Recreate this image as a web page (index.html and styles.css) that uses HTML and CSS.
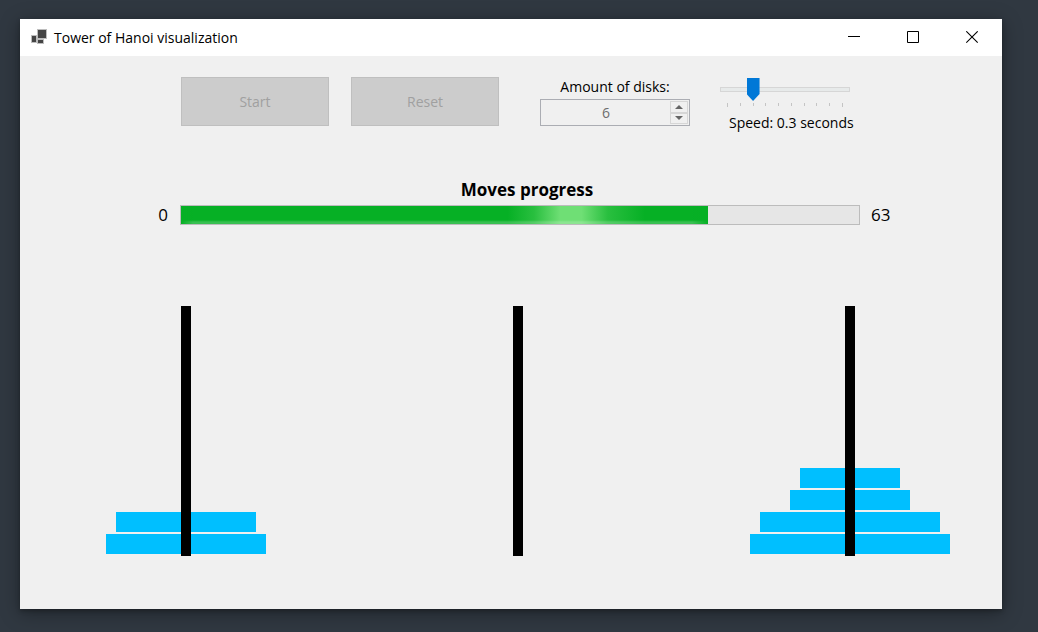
FILE: index.html
```html
<!DOCTYPE html>
<html lang="en">
<head>
<meta charset="utf-8">
<title>Tower of Hanoi visualization</title>
<link rel="stylesheet" href="styles.css">
</head>
<body>
<div class="window">
  <header class="titlebar">
    <svg class="app-icon" width="18" height="18" viewBox="0 0 18 18" aria-hidden="true">
      <g fill="#444" stroke="#bdbdbd" stroke-width="1">
        <rect x="1.500" y="6.500" width="5" height="7"/>
        <rect x="7.500" y="10.500" width="6" height="4"/>
        <rect x="7.500" y="0.500" width="9" height="9"/>
      </g>
    </svg>
    <h1 class="title">Tower of Hanoi visualization</h1>
    <button class="caption-button" type="button" aria-label="Minimize">
      <svg width="13" height="13" viewBox="0 0 13 13"><path d="M0 5.500H12" stroke="#000"/></svg>
    </button>
    <button class="caption-button" type="button" aria-label="Maximize">
      <svg width="13" height="13" viewBox="0 0 13 13"><path d="M.5 .5H11.500V11.500H.5Z" fill="none" stroke="#000"/></svg>
    </button>
    <button class="caption-button" type="button" aria-label="Close">
      <svg width="13" height="13" viewBox="0 0 13 13"><path d="M.3 .3L11.700 11.700M11.700 .3L.3 11.700" stroke="#000" stroke-width="1.100"/></svg>
    </button>
  </header>
  <main class="content">
    <section class="controls">
      <button class="action" type="button" disabled>Start</button>
      <button class="action" type="button" disabled>Reset</button>
      <div class="amount">
        <label class="label" for="disks">Amount of disks:</label>
        <div class="spinner">
          <input class="spinner-value" id="disks" type="number" value="6" min="1" max="10" disabled>
          <div class="spinner-buttons">
            <button class="step" type="button" aria-label="More disks" disabled><svg width="8" height="4" viewBox="0 0 8 4"><path d="M0 4L4 0L8 4Z" fill="#666"/></svg></button>
            <button class="step" type="button" aria-label="Fewer disks" disabled><svg width="8" height="4" viewBox="0 0 8 4"><path d="M0 0L4 4L8 0Z" fill="#666"/></svg></button>
          </div>
        </div>
      </div>
      <div class="speed">
        <input class="slider" id="speed" type="range" min="1" max="10" value="3">
        <div class="ticks" aria-hidden="true"><i></i><i></i><i></i><i></i><i></i><i></i><i></i><i></i><i></i><i></i></div>
        <label class="label speed-label" for="speed">Speed: 0.3 seconds</label>
      </div>
    </section>
    <section class="moves">
      <label class="moves-title" for="moves">Moves progress</label>
      <span class="count count-start">0</span>
      <progress class="bar" id="moves" max="63" value="49"></progress>
      <span class="count">63</span>
    </section>
    <section class="towers">
      <div class="tower">
        <div class="disk size-4"></div>
        <div class="disk size-5"></div>
        <div class="rod"></div>
      </div>
      <div class="tower">
        <div class="rod"></div>
      </div>
      <div class="tower">
        <div class="disk size-2"></div>
        <div class="disk size-3"></div>
        <div class="disk size-6"></div>
        <div class="disk size-7"></div>
        <div class="rod"></div>
      </div>
    </section>
  </main>
</div>
</body>
</html>
```
FILE: styles.css
```css
* { box-sizing: border-box; }

body {
  margin: 0;
  min-height: 100vh;
  padding: 19px 36px 23px 20px;
  display: flex;
  background: #303841;
  color: #000;
  font: 14px/20px "Open Sans", "Noto Sans", sans-serif;
}

button, input { font: inherit; }

.window {
  flex: 1;
  display: flex;
  flex-direction: column;
  background: #f0f0f0;
  box-shadow: 0 2px 4px rgba(0, 0, 0, .25), 0 4px 18px rgba(0, 0, 0, .35);
}

.titlebar {
  height: 37px;
  display: flex;
  align-items: center;
  padding-left: 10px;
  background: #fff;
}

.title {
  flex: 1;
  margin: 0 0 0 6px;
  font-size: 14px;
  font-weight: 400;
}

.caption-button {
  width: 59px;
  height: 37px;
  padding: 0;
  border: 0;
  background: none;
  display: flex;
  align-items: center;
  justify-content: center;
}

.content {
  flex: 1;
  padding-top: 21px;
}

.controls {
  display: flex;
  align-items: flex-start;
  padding-left: 161px;
}

.action {
  width: 148px;
  height: 49px;
  margin-right: 22px;
  border: 1px solid #bfbfbf;
  background: #ccc;
  color: #a0a0a0;
}

.amount {
  width: 150px;
  margin: 0 30px 0 19px;
  text-align: center;
}

.label { display: block; }

.spinner {
  height: 27px;
  margin-top: 2px;
  padding: 0 1px;
  display: flex;
  border: 1px solid #abadb3;
}

.spinner-value {
  flex: 1;
  min-width: 0;
  padding: 0;
  border: 0;
  background: none;
  color: #6d6d6d;
  text-align: center;
  appearance: textfield;
}

.spinner-value::-webkit-inner-spin-button { appearance: none; margin: 0; }

.spinner-buttons {
  width: 18px;
  display: flex;
  flex-direction: column;
  padding: 1px 0;
}

.step {
  flex: 1;
  padding: 0;
  border: 1px solid #d6d6d6;
  background: #f0f0f0;
  display: flex;
  align-items: center;
  justify-content: center;
}

.speed {
  width: 130px;
  padding-top: 1px;
}

.slider {
  display: block;
  width: 100%;
  height: 23px;
  margin: 0;
  background: none;
  appearance: none;
}

.slider::-webkit-slider-runnable-track {
  height: 5px;
  border: 1px solid #d6d6d6;
  background: #e7eaea;
}

.slider::-webkit-slider-thumb {
  appearance: none;
  width: 13px;
  height: 23px;
  margin-top: -10px;
  background: #0078d7;
  clip-path: polygon(0 0, 100% 0, 100% 70%, 50% 100%, 0 70%);
}

.ticks {
  height: 4px;
  margin-top: 2px;
  padding: 0 7px;
  display: flex;
  justify-content: space-between;
}

.ticks i {
  width: 1px;
  height: 3px;
  background: #c4c4c4;
}

.ticks i:first-child, .ticks i:last-child { height: 4px; }

.speed-label {
  margin-top: 6px;
  padding-left: 9px;
  white-space: nowrap;
}

.moves {
  margin-top: 45px;
  display: grid;
  grid-template-columns: 160px 1fr 142px;
  row-gap: 3px;
  align-items: center;
}

.moves-title {
  grid-column: 2;
  padding-left: 14px;
  text-align: center;
  font-size: 17px;
  font-weight: 700;
  line-height: 24px;
}

.count {
  padding-left: 11px;
  font-size: 17px;
}

.count-start {
  grid-column: 1;
  padding: 0 12px 0 0;
  text-align: right;
}

.bar {
  display: block;
  width: 100%;
  height: 20px;
  border: 1px solid #bcbcbc;
  background: #e6e6e6;
  appearance: none;
}

.bar::-webkit-progress-bar { background: #e6e6e6; }

.bar::-webkit-progress-value {
  background:
    linear-gradient(90deg, #06b025 0, transparent 12px, transparent calc(100% - 16px), #06b025 100%),
    linear-gradient(transparent 14px, rgba(255, 255, 255, .2) 16px),
    linear-gradient(90deg, #06b025 62%, #29bf3f 67%, #6fdf75 72%, #6fdf75 76%, #29bf3f 81%, #06b025 88%);
}

.towers {
  margin-top: 81px;
  padding: 0 52px 0 66px;
  display: flex;
  justify-content: space-between;
}

.tower {
  position: relative;
  width: 200px;
  height: 250px;
  padding-bottom: 2px;
  display: flex;
  flex-direction: column;
  align-items: center;
  justify-content: flex-end;
  gap: 2px;
}

.disk {
  height: 20px;
  background: #00bfff;
}

.size-2 { width: 100px; }
.size-3 { width: 120px; }
.size-4 { width: 140px; }
.size-5 { width: 160px; }
.size-6 { width: 180px; }
.size-7 { width: 200px; }

.rod {
  position: absolute;
  top: 0;
  bottom: 0;
  left: 95px;
  width: 10px;
  background: #000;
}
```
